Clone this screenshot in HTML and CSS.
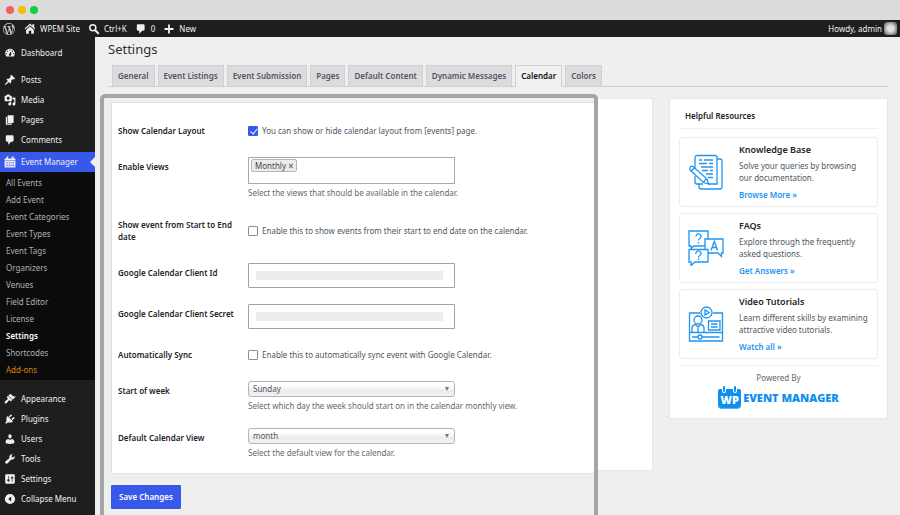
FILE: index.html
```html
<!DOCTYPE html>
<html lang="en">

<head>
    <meta charset="UTF-8">
    <meta name="viewport" content="width=device-width, initial-scale=1.0">
    <title>Settings - WPEM Site</title>
    <link rel="stylesheet" href="styles.css">
</head>

<body>
    <div class="window-bar">
        <span class="dot red"></span>
        <span class="dot yellow"></span>
        <span class="dot green"></span>
    </div>

    <header class="admin-bar">
        <a href="#" class="wp-logo" aria-label="WordPress"><svg viewBox="0 0 20 20"><path d="M20 10c0-5.51-4.49-10-10-10C4.48 0 0 4.49 0 10c0 5.52 4.48 10 10 10 5.51 0 10-4.48 10-10zM7.78 15.37L4.37 6.22c.55-.02 1.17-.08 1.17-.08.5-.06.44-1.13-.06-1.11 0 0-1.45.11-2.37.11-.18 0-.37 0-.58-.01C4.12 2.69 6.87 1.11 10 1.11c2.33 0 4.45.87 6.05 2.34-.68-.11-1.65.39-1.65 1.58 0 .74.45 1.36.9 2.1.35.61.55 1.36.55 2.46 0 1.49-1.4 5-1.4 5l-3.03-8.37c.54-.02.82-.17.82-.17.5-.05.44-1.25-.06-1.22 0 0-1.44.12-2.38.12-.87 0-2.33-.12-2.33-.12-.5-.03-.56 1.2-.06 1.22l.92.08 1.26 3.41zM17.41 10c.24-.64.74-1.87.43-4.25.7 1.29 1.05 2.71 1.05 4.25 0 3.29-1.73 6.24-4.4 7.78.97-2.59 1.94-5.2 2.92-7.78zM6.1 18.09C3.12 16.65 1.11 13.53 1.11 10c0-1.3.23-2.48.72-3.59C3.25 10.3 4.67 14.2 6.1 18.09zm4.03-6.63l2.58 6.98c-.86.29-1.76.45-2.71.45-.79 0-1.57-.11-2.29-.33.81-2.38 1.62-4.74 2.42-7.1z"/></svg></a>
        <a href="#"><svg viewBox="0 0 20 20"><path d="M10 1l9 8-1.300 1.500L10 3.800l-7.700 6.700L1 9zM14 2h3v5L14 4.500zM10 5.500l6.500 6V18H12v-5H8v5H3.500v-6.500z"/></svg>WPEM Site</a>
        <a href="#"><svg viewBox="0 0 20 20"><path fill="none" stroke="currentColor" stroke-width="2.500" d="M13 8a5 5 0 1 1-10 0 5 5 0 0 1 10 0z"/><path fill="none" stroke="currentColor" stroke-width="3.500" stroke-linecap="round" d="M12.500 12.500l4.500 4.500"/></svg>Ctrl+K</a>
        <a href="#"><svg viewBox="0 0 20 20"><path d="M5 2h9c1.100 0 2 .9 2 2v7c0 1.100-.9 2-2 2h-2l-5 5v-5H5c-1.100 0-2-.9-2-2V4c0-1.100.9-2 2-2z"/></svg>0</a>
        <a href="#"><svg viewBox="0 0 20 20"><path d="M8.500 2.500h3v6h6v3h-6v6h-3v-6h-6v-3h6z"/></svg>New</a>
        <a href="#" class="account">Howdy, admin<span class="avatar"></span></a>
    </header>

    <div class="layout">
        <nav class="side-menu">
            <ul class="menu">
                <li><a href="#"><svg viewBox="0 0 20 20"><path fill-rule="evenodd" d="M3.760 16h12.480c1.100-1.370 1.760-3.110 1.760-5 0-4.420-3.580-8-8-8s-8 3.580-8 8c0 1.890.66 3.630 1.760 5zM10 4c.55 0 1 .45 1 1s-.45 1-1 1-1-.45-1-1 .45-1 1-1zM6 6c.55 0 1 .45 1 1s-.45 1-1 1-1-.45-1-1 .45-1 1-1zm8 0c.55 0 1 .45 1 1s-.45 1-1 1-1-.45-1-1 .45-1 1-1zm-5.370 5.550L12 7v6c0 1.100-.9 2-2 2s-2-.9-2-2c0-.57.24-1.080.63-1.450zM4 10c.55 0 1 .45 1 1s-.45 1-1 1-1-.45-1-1 .45-1 1-1zm12 0c.55 0 1 .45 1 1s-.45 1-1 1-1-.45-1-1 .45-1 1-1z"/></svg>Dashboard</a></li>
                <li class="group"><a href="#"><svg viewBox="0 0 20 20"><path d="M10.44 3.02l1.82-1.82 6.36 6.35-1.83 1.82c-1.05-.68-2.48-.57-3.41.36l-.75.75c-.92.93-1.04 2.35-.35 3.41l-1.83 1.82-2.41-2.41-2.8 2.79c-.42.42-3.38 2.71-3.8 2.29s1.86-3.39 2.28-3.81l2.79-2.79L4.1 9.36l1.83-1.82c1.05.69 2.48.57 3.4-.36l.75-.75c.93-.92 1.05-2.35.36-3.41z"/></svg>Posts</a></li>
                <li><a href="#"><svg viewBox="0 0 20 20"><path fill-rule="evenodd" d="M13 11V4c0-.55-.45-1-1-1h-1.670L9 1H5L3.670 3H2c-.55 0-1 .45-1 1v7c0 .55.45 1 1 1h10c.55 0 1-.45 1-1zM7 4.500c1.380 0 2.500 1.120 2.500 2.500S8.380 9.500 7 9.500 4.500 8.380 4.500 7 5.620 4.500 7 4.500zM14 6h5v10.500c0 1.380-1.120 2.500-2.500 2.500S14 17.880 14 16.500s1.120-2.500 2.500-2.500c.17 0 .34.02.5.05V9h-3V6zm-4 8.050V13h2v3.500c0 1.380-1.120 2.500-2.500 2.500S7 17.880 7 16.500 8.120 14 9.500 14c.17 0 .34.02.5.05z"/></svg>Media</a></li>
                <li><a href="#"><svg viewBox="0 0 20 20"><path d="M6 15V2h10v13H6zm-1 1h8v2H3V5h2v11z"/></svg>Pages</a></li>
                <li><a href="#"><svg viewBox="0 0 20 20"><path d="M5 2h9c1.100 0 2 .9 2 2v7c0 1.100-.9 2-2 2h-2l-5 5v-5H5c-1.100 0-2-.9-2-2V4c0-1.100.9-2 2-2z"/></svg>Comments</a></li>
                <li class="current">
                    <a href="#"><svg viewBox="0 0 20 20"><path fill-rule="evenodd" d="M1 4h3V1h3v3h6V1h3v3h3v3H1zM1 8h18v11H1zM4 10v2h2v-2zM8 10v2h1.500v-2zM11 10v2h1.500v-2zM14.500 10v2h2v-2zM4 14v3h2v-3zM8 14v3h1.500v-3zM11 14v3h1.500v-3zM14.500 14v3h2v-3z"/></svg>Event Manager</a>
                    <ul class="submenu">
                        <li><a href="#">All Events</a></li>
                        <li><a href="#">Add Event</a></li>
                        <li><a href="#">Event Categories</a></li>
                        <li><a href="#">Event Types</a></li>
                        <li><a href="#">Event Tags</a></li>
                        <li><a href="#">Organizers</a></li>
                        <li><a href="#">Venues</a></li>
                        <li><a href="#">Field Editor</a></li>
                        <li><a href="#">License</a></li>
                        <li><a href="#" class="active">Settings</a></li>
                        <li><a href="#">Shortcodes</a></li>
                        <li><a href="#" class="addons">Add-ons</a></li>
                    </ul>
                </li>
                <li class="group"><a href="#"><svg viewBox="0 0 20 20"><path d="M14.48 11.06L7.41 3.99l1.500-1.500c.5-.56 2.300-.47 3.510.32 1.210.8 1.430 1.280 2.910 2.100 1.180.64 2.450 1.260 4.450.85zm-.71.71L6.700 4.700 4.930 6.470c-.39.39-.39 1.020 0 1.410l1.060 1.060c.39.39.39 1.030 0 1.420-.6.6-1.430 1.110-2.210 1.690-.35.26-.7.53-1.010.84C1.430 14.230.4 16.080 1.400 17.070c.99 1 2.840-.03 4.180-1.360.31-.31.58-.66.85-1.020.57-.78 1.080-1.610 1.690-2.210.39-.39 1.020-.39 1.410 0l1.060 1.060c.39.39 1.020.39 1.410 0z"/></svg>Appearance</a></li>
                <li><a href="#"><svg viewBox="0 0 20 20"><path d="M13.11 4.36L9.87 7.6 8 5.73l3.24-3.24c.35-.34 1.05-.2 1.56.32.52.51.66 1.21.31 1.55zm-8 1.77l.91-1.12 9.01 9.01-1.19.84c-.71.71-2.63 1.16-3.82 1.16H6.14L4.9 17.26c-.59.59-1.54.59-2.12 0-.59-.58-.59-1.53 0-2.12l1.24-1.24v-3.88c0-1.13.4-3.19 1.09-3.89zm7.26 3.97l3.24-3.24c.34-.35 1.04-.21 1.55.31.52.51.66 1.21.31 1.55l-3.24 3.25z"/></svg>Plugins</a></li>
                <li><a href="#"><svg viewBox="0 0 20 20"><path d="M10 9.25c-2.27 0-2.73-3.44-2.73-3.44C7 4.02 7.82 2 9.97 2c2.16 0 2.98 2.02 2.71 3.81 0 0-.41 3.44-2.68 3.44zm0 2.57L12.72 10c2.39 0 4.52 2.33 4.52 4.53v2.49s-3.65 1.13-7.24 1.13c-3.65 0-7.24-1.13-7.24-1.13v-2.49c0-2.25 1.94-4.48 4.47-4.48z"/></svg>Users</a></li>
                <li><a href="#"><svg viewBox="0 0 20 20"><path d="M16.68 9.77c-1.34 1.34-3.3 1.67-4.95.99l-5.41 6.52c-.99.99-2.59.99-3.58 0s-.99-2.59 0-3.57l6.52-5.42c-.68-1.65-.35-3.61.99-4.95 1.28-1.28 3.12-1.62 4.72-1.06l-2.89 2.89 2.82 2.82 2.86-2.87c.53 1.58.18 3.39-1.08 4.65z"/></svg>Tools</a></li>
                <li><a href="#"><svg viewBox="0 0 20 20"><path fill-rule="evenodd" d="M18 16V4c0-1.100-.9-2-2-2H4c-1.100 0-2 .9-2 2v12c0 1.100.9 2 2 2h12c1.100 0 2-.9 2-2zM8 11h1c.55 0 1 .45 1 1s-.45 1-1 1H8v1.500c0 .28-.22.5-.5.5s-.5-.22-.5-.5V13H6c-.55 0-1-.45-1-1s.45-1 1-1h1V5.500c0-.28.22-.5.5-.5s.5.22.5.5V11zm5-2h-1c-.55 0-1-.45-1-1s.45-1 1-1h1V5.500c0-.28.22-.5.5-.5s.5.22.5.5V7h1c.55 0 1 .45 1 1s-.45 1-1 1h-1v5.500c0 .28-.22.5-.5.5s-.5-.22-.5-.5V9z"/></svg>Settings</a></li>
                <li><a href="#"><svg viewBox="0 0 20 20"><path fill-rule="evenodd" d="M10 1.500a8.500 8.500 0 1 0 0 17 8.500 8.500 0 0 0 0-17zM12 6v8L7 10z"/></svg>Collapse Menu</a></li>
            </ul>
        </nav>

        <main class="content">
            <h1>Settings</h1>
            <nav class="tabs">
                <a href="#">General</a>
                <a href="#">Event Listings</a>
                <a href="#">Event Submission</a>
                <a href="#">Pages</a>
                <a href="#">Default Content</a>
                <a href="#">Dynamic Messages</a>
                <a href="#" class="active">Calendar</a>
                <a href="#">Colors</a>
            </nav>

            <div class="columns">
                <div class="settings">
                    <div class="panel"></div>
                    <form class="highlight">
                        <div class="form-table">
                            <div class="row">
                                <label for="show-layout">Show Calendar Layout</label>
                                <div class="check"><input type="checkbox" id="show-layout" checked><span>You can show or hide calendar layout from [events] page.</span></div>
                            </div>
                            <div class="row">
                                <label for="views">Enable Views</label>
                                <div class="field">
                                    <div class="multi-select">
                                        <span class="tag">Monthly<button type="button" aria-label="Remove Monthly"><svg viewBox="0 0 10 10"><path d="M2 1.500l6 7M8 1.500l-6 7"/></svg></button></span>
                                        <input type="text" id="views">
                                    </div>
                                    <p>Select the views that should be available in the calendar.</p>
                                </div>
                            </div>
                            <div class="row">
                                <label for="start-end">Show event from Start to End date</label>
                                <div class="check"><input type="checkbox" id="start-end"><span>Enable this to show events from their start to end date on the calendar.</span></div>
                            </div>
                            <div class="row">
                                <label for="client-id">Google Calendar Client Id</label>
                                <div class="field"><input type="text" id="client-id" class="masked"></div>
                            </div>
                            <div class="row">
                                <label for="client-secret">Google Calendar Client Secret</label>
                                <div class="field"><input type="text" id="client-secret" class="masked"></div>
                            </div>
                            <div class="row">
                                <label for="auto-sync">Automatically Sync</label>
                                <div class="check"><input type="checkbox" id="auto-sync"><span>Enable this to automatically sync event with Google Calendar.</span></div>
                            </div>
                            <div class="row">
                                <label for="week-start">Start of week</label>
                                <div class="field">
                                    <div class="select"><select id="week-start"><option>Sunday</option></select></div>
                                    <p>Select which day the week should start on in the calendar monthly view.</p>
                                </div>
                            </div>
                            <div class="row">
                                <label for="default-view">Default Calendar View</label>
                                <div class="field">
                                    <div class="select"><select id="default-view"><option>month</option></select></div>
                                    <p>Select the default view for the calendar.</p>
                                </div>
                            </div>
                        </div>
                        <button type="submit" class="save">Save Changes</button>
                    </form>
                </div>

                <aside class="resources">
                    <h2>Helpful Resources</h2>
                    <div class="cards">
                        <div class="card">
                            <svg viewBox="0 0 36 36">
                                <path d="M7 14V3.500a2 2 0 0 1 2-2h18a2 2 0 0 1 2 2V30H20M7 22v6a2 2 0 0 0 2 2h6"/>
                                <path d="M29 5h3a2 2 0 0 1 2 2v26a2 2 0 0 1-2 2H13a2 2 0 0 1-2-2v-3"/>
                                <path d="M11 6h3M16 6h9M11 9.500h8M21 9.500h4M13 13h12M14 16.500h6M22 16.500h3M18 20h7M20 23.500h5"/>
                                <path d="M2 13.500a2 2 0 0 1 3-1L19 25l1.500 5-5-1.500L2 16zM6.500 13.500L3.500 17M15.500 28l3-3"/>
                            </svg>
                            <div>
                                <h3>Knowledge Base</h3>
                                <p>Solve your queries by browsing our documentation.</p>
                                <a href="#">Browse More »</a>
                            </div>
                        </div>
                        <div class="card">
                            <svg viewBox="0 0 36 36">
                                <path d="M1 1h19v15H6l-3 2.500V16H1z"/>
                                <path d="M17 9h18v14h-1.500v3.500L30 23H17z" fill="#fff"/>
                                <path d="M1 19.500h19v12.500H7l-4 3.500V32H1z" fill="#fff"/>
                                <path d="M8 6.500a2.500 2.500 0 1 1 3.800 2c-1 .5-1.300 1-1.300 2M10.500 12v1.500M8 24a2.500 2.500 0 1 1 3.800 1.500c-1 .5-1.300 1-1.300 2M10.500 28.500v1.500"/>
                                <path d="M23 20.500l3.300-9 3.300 9M24.300 17.500h4"/>
                            </svg>
                            <div>
                                <h3>FAQs</h3>
                                <p>Explore through the frequently asked questions.</p>
                                <a href="#">Get Answers »</a>
                            </div>
                        </div>
                        <div class="card">
                            <svg viewBox="0 0 36 36">
                                <path d="M12 7H1.500v28h33V7H25M1.500 26.500h33"/>
                                <circle cx="18.500" cy="6.500" r="5.500"/>
                                <path d="M17 4v5l4-2.500z"/>
                                <circle cx="10" cy="14" r="4"/>
                                <path d="M4 26v-3.500a4 4 0 0 1 3.500-4L10 21l2.500-2.500a4 4 0 0 1 3.500 4V26M10 21v5M20.500 15h11.500v9H20.500zM23 18h6.500M23 21h6.500"/>
                                <path d="M4 31h6M14 31h17.500"/>
                                <circle cx="12" cy="31" r="2"/>
                            </svg>
                            <div>
                                <h3>Video Tutorials</h3>
                                <p>Learn different skills by examining attractive video tutorials.</p>
                                <a href="#">Watch all »</a>
                            </div>
                        </div>
                    </div>
                    <div class="powered">
                        <p>Powered By</p>
                        <a href="#" class="brand">
                            <span class="brand-mark">WP</span>
                            EVENT MANAGER
                        </a>
                    </div>
                </aside>
            </div>
        </main>
    </div>
</body>

</html>
```

FILE: styles.css
```css
* {
    box-sizing: border-box;
}

body {
    font-family: 'Noto Sans', 'Open Sans', sans-serif;
    font-size: 8px;
    line-height: 12px;
    background-color: #efefef;
    color: #50575e;
    margin: 0;
    height: 100vh;
    display: flex;
    flex-direction: column;
    overflow: hidden;
}

h1, h2, h3, p, ul {
    margin: 0;
    padding: 0;
    font-weight: 400;
}

ul {
    list-style: none;
}

a {
    text-decoration: none;
    color: inherit;
}

input, select, button {
    font: inherit;
    color: inherit;
    margin: 0;
}

.window-bar {
    flex: none;
    height: 20px;
    padding-left: 6px;
    display: flex;
    align-items: center;
    gap: 4px;
    background-color: #dadcdd;
}

.dot {
    width: 8px;
    height: 8px;
    border-radius: 50%;
}

.red {
    background-color: #f95f54;
}

.yellow {
    background-color: #fbbc05;
}

.green {
    background-color: #12cf3f;
}

.admin-bar {
    flex: none;
    height: 17px;
    padding: 0 3px;
    display: flex;
    align-items: center;
    gap: 8px;
    background-color: #1e1e1e;
    color: #f0f0f1;
}

.admin-bar a {
    display: flex;
    align-items: center;
    gap: 4px;
}

.admin-bar svg {
    width: 12px;
    height: 12px;
    fill: currentColor;
}

.admin-bar .wp-logo {
    margin-right: 1px;
    color: #c3c4c7;
}

.admin-bar .account {
    margin-left: auto;
    gap: 2px;
}

.avatar {
    width: 13px;
    height: 13px;
    border-radius: 3px;
    background: radial-gradient(#e4e2df 30%, #8d8a86 70%, #55524f);
}

.layout {
    flex: 1;
    min-height: 0;
    display: flex;
}

.side-menu {
    flex: none;
    width: 95px;
    padding-top: 6px;
    background-color: #1e1e1e;
    color: #f0f0f1;
}

.menu a {
    height: 20px;
    padding-left: 4px;
    display: flex;
    align-items: center;
    gap: 5px;
}

.menu svg {
    width: 12px;
    height: 12px;
    fill: currentColor;
}

.menu .group {
    margin-top: 7px;
}

.menu .current {
    margin-top: 2px;
    background-color: #3858e9;
    position: relative;
}

.menu .current + .group {
    margin-top: 9px;
}

.current::after {
    content: "";
    position: absolute;
    right: 0;
    top: 5px;
    border: 5px solid transparent;
    border-left: 0;
    border-right-color: #efefef;
}

.menu .submenu {
    padding: 2px 0;
    background-color: #0b0b0b;
    color: #b0b1b2;
}

.submenu a {
    height: 17px;
    padding-left: 6px;
}

.submenu .active {
    color: #fff;
    font-weight: 600;
}

.submenu .addons {
    color: #d98410;
}

.content {
    flex: 1;
    min-width: 0;
    display: flex;
    flex-direction: column;
    padding: 3px 12px 0 5px;
}

h1 {
    font-size: 13px;
    line-height: 18px;
    padding-left: 8px;
    color: #2c3338;
}

.tabs {
    display: flex;
    gap: 3px;
    margin: 7px 0 0 8px;
    padding-left: 4px;
    border-bottom: 1px solid #d0d1d4;
}

.tabs a {
    padding: 4px 5px;
    line-height: 12px;
    font-weight: 600;
    border: 1px solid #d0d1d4;
    border-bottom: 0;
    background-color: #dcdcde;
    white-space: nowrap;
}

.tabs .active {
    margin-bottom: -1px;
    background-color: #f0f0f1;
    color: #111;
}

.columns {
    flex: 1;
    display: flex;
    align-items: flex-start;
    gap: 16px;
    padding-top: 7px;
}

/* the highlighted form lies on top of the white panel */
.settings {
    flex: 1;
    align-self: stretch;
    display: grid;
}

.panel, .highlight {
    grid-area: 1 / 1;
}

.panel {
    height: 373px;
    margin: 4px 0 0 11px;
    background-color: #fff;
    border: 1px solid #e8e8e9;
}

.highlight {
    margin-right: 55px;
    padding: 4px 0 0 7px;
    border: 4px solid #a5a5a5;
    border-bottom: 0;
    border-radius: 5px 5px 0 0;
    background-color: #efefef;
    z-index: 1;
}

.form-table {
    padding: 10px 6px 6px;
    background-color: #fff;
    border: 1px solid #e2e2e4;
    border-right: 0;
}

.row {
    display: grid;
    grid-template-columns: 120px 1fr;
    column-gap: 10px;
}

.row > label {
    padding: 12px 0;
    color: #1d2327;
    font-weight: 600;
}

.field {
    padding: 8px 0;
}

.field p {
    margin-top: 3px;
    color: #646970;
}

.check {
    display: flex;
    align-items: center;
    gap: 4px;
}

.check input {
    appearance: none;
    width: 10px;
    height: 10px;
    border: 1px solid #8c8f94;
    border-radius: 1px;
    background-color: #fff;
}

.check input:checked {
    position: relative;
    border-color: #3858e9;
    background-color: #3858e9;
}

.check input:checked::after {
    content: "";
    position: absolute;
    left: 3px;
    top: 0;
    width: 3px;
    height: 6px;
    border: solid #fff;
    border-width: 0 1px 1px 0;
    transform: rotate(40deg);
}

.multi-select {
    width: 207px;
    height: 27px;
    padding: 1px 2px;
    display: flex;
    align-items: flex-start;
    border: 1px solid #aaa;
    background-color: #fff;
}

.multi-select input {
    flex: 1;
    min-width: 0;
    border: 0;
    padding: 0;
    outline: 0;
    background: none;
}

.tag {
    height: 13px;
    padding: 0 2px 0 3px;
    display: flex;
    align-items: center;
    gap: 2px;
    border: 1px solid #b5b5b5;
    border-radius: 2px;
    background-color: #ececec;
    color: #444;
}

.tag button {
    width: 6px;
    height: 6px;
    padding: 0;
    border: 0;
    background: none;
    display: flex;
}

.tag svg {
    stroke: #777;
    stroke-width: 2;
}

.masked {
    display: block;
    width: 207px;
    height: 25px;
    padding: 7px 11px 7px 7px;
    border: 1px solid #a0a3a7;
    border-radius: 1px;
    background: linear-gradient(#ededed, #ededed) content-box #fff;
}

.select {
    position: relative;
    width: 207px;
}

.select select {
    appearance: none;
    display: block;
    width: 100%;
    height: 16px;
    padding: 0 4px;
    border: 1px solid #b4b4b4;
    border-radius: 3px;
    background: linear-gradient(#fff 20%, #f4f4f4 50%, #ececec 60%, #f2f2f2);
}

.select::after {
    content: "";
    position: absolute;
    right: 6px;
    top: 6px;
    border: 2px solid transparent;
    border-top: 4px solid #777;
    border-bottom: 0;
}

.save {
    margin-top: 11px;
    height: 24px;
    padding: 0 8px;
    border: 0;
    border-radius: 1px;
    background-color: #3858e9;
    color: #fff;
    font-weight: 600;
}

.resources {
    flex: none;
    width: 219px;
    margin-top: 4px;
    padding: 7px 9px 9px;
    border: 1px solid #e6e6e8;
    background-color: #fff;
}

.resources h2 {
    padding: 4px 6px 6px;
    border-bottom: 1px solid #f0f0f1;
    font-size: 8px;
    font-weight: 600;
    color: #1d2327;
}

.cards {
    display: flex;
    flex-direction: column;
    gap: 6px;
    padding: 8px 0 6px;
}

.card {
    height: 70px;
    padding: 0 8px;
    display: flex;
    align-items: center;
    gap: 15px;
    border: 1px solid #ececee;
    border-radius: 3px;
}

.card svg {
    flex: none;
    width: 36px;
    height: 36px;
    fill: none;
    stroke: #1f94f0;
    stroke-width: 1.3;
}

.card h3 {
    margin-bottom: 4px;
    font-size: 9px;
    font-weight: 600;
    color: #1d2327;
}

.card a {
    display: block;
    margin-top: 5px;
    font-weight: 600;
    color: #1f94f0;
}

.powered {
    padding: 6px 0 0;
    border-top: 1px solid #f0f0f1;
    text-align: center;
    color: #646970;
}

.brand {
    margin-top: 2px;
    display: flex;
    align-items: center;
    justify-content: center;
    gap: 2px;
    font-family: 'Open Sans', sans-serif;
    font-size: 11px;
    font-weight: 800;
    color: #0f8ff0;
}

.brand-mark {
    position: relative;
    width: 23px;
    height: 20px;
    margin-top: 3px;
    line-height: 21px;
    border-radius: 2px 2px 4px 4px;
    border-bottom: 1px solid #5bb3f5;
    background-color: #0f8ff0;
    color: #fff;
}

.brand-mark::before,
.brand-mark::after {
    content: "";
    position: absolute;
    left: 5px;
    top: -3px;
    width: 2px;
    height: 6px;
    border-radius: 1px;
    background-color: #0f8ff0;
    box-shadow: 0 0 0 1px #fff;
}

.brand-mark::after {
    left: auto;
    right: 5px;
}
```
